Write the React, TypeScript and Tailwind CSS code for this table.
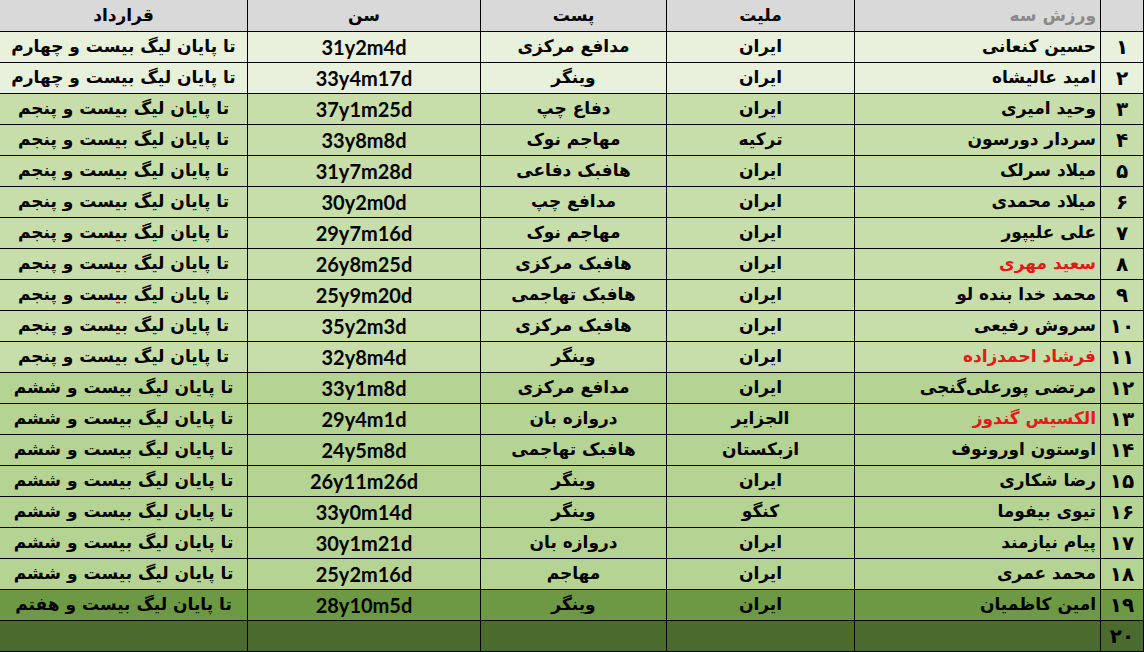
type Player = {
  name: string
  nat: string
  post: string
  age: string
  contract: string
  red?: boolean
}

const players: Player[] = [
  { name: "حسین کنعانی", nat: "ایران", post: "مدافع مرکزی", age: "31y2m4d", contract: "تا پایان لیگ بیست و چهارم" },
  { name: "امید عالیشاه", nat: "ایران", post: "وینگر", age: "33y4m17d", contract: "تا پایان لیگ بیست و چهارم" },
  { name: "وحید امیری", nat: "ایران", post: "دفاع چپ", age: "37y1m25d", contract: "تا پایان لیگ بیست و پنجم" },
  { name: "سردار دورسون", nat: "ترکیه", post: "مهاجم نوک", age: "33y8m8d", contract: "تا پایان لیگ بیست و پنجم" },
  { name: "میلاد سرلک", nat: "ایران", post: "هافبک دفاعی", age: "31y7m28d", contract: "تا پایان لیگ بیست و پنجم" },
  { name: "میلاد محمدی", nat: "ایران", post: "مدافع چپ", age: "30y2m0d", contract: "تا پایان لیگ بیست و پنجم" },
  { name: "علی علیپور", nat: "ایران", post: "مهاجم نوک", age: "29y7m16d", contract: "تا پایان لیگ بیست و پنجم" },
  { name: "سعید مهری", nat: "ایران", post: "هافبک مرکزی", age: "26y8m25d", contract: "تا پایان لیگ بیست و پنجم", red: true },
  { name: "محمد خدا بنده لو", nat: "ایران", post: "هافبک تهاجمی", age: "25y9m20d", contract: "تا پایان لیگ بیست و پنجم" },
  { name: "سروش رفیعی", nat: "ایران", post: "هافبک مرکزی", age: "35y2m3d", contract: "تا پایان لیگ بیست و پنجم" },
  { name: "فرشاد احمدزاده", nat: "ایران", post: "وینگر", age: "32y8m4d", contract: "تا پایان لیگ بیست و پنجم", red: true },
  { name: "مرتضی پورعلی‌گنجی", nat: "ایران", post: "مدافع مرکزی", age: "33y1m8d", contract: "تا پایان لیگ بیست و ششم" },
  { name: "الکسیس گندوز", nat: "الجزایر", post: "دروازه بان", age: "29y4m1d", contract: "تا پایان لیگ بیست و ششم", red: true },
  { name: "اوستون اورونوف", nat: "ازبکستان", post: "هافبک تهاجمی", age: "24y5m8d", contract: "تا پایان لیگ بیست و ششم" },
  { name: "رضا شکاری", nat: "ایران", post: "وینگر", age: "26y11m26d", contract: "تا پایان لیگ بیست و ششم" },
  { name: "تیوی بیفوما", nat: "کنگو", post: "وینگر", age: "33y0m14d", contract: "تا پایان لیگ بیست و ششم" },
  { name: "پیام نیازمند", nat: "ایران", post: "دروازه بان", age: "30y1m21d", contract: "تا پایان لیگ بیست و ششم" },
  { name: "محمد عمری", nat: "ایران", post: "مهاجم", age: "25y2m16d", contract: "تا پایان لیگ بیست و ششم" },
  { name: "امین کاظمیان", nat: "ایران", post: "وینگر", age: "28y10m5d", contract: "تا پایان لیگ بیست و هفتم" },
]

// ارقام فارسی برای ستون شماره
const faDigits = (n: number) => String(n).replace(/\d/g, (d) => "۰۱۲۳۴۵۶۷۸۹"[Number(d)])

function rowBg(i: number) {
  if (i < 2) return "bg-[#e8f1dc]"
  if (i < 11) return "bg-[#c7deab]"
  if (i < 18) return "bg-[#b5d493]"
  if (i === 18) return "bg-[#6d9944]"
  return "bg-[#4a6b2d]"
}

const cell = "border border-black px-1 leading-none"
const fa = "font-['DejaVu_Sans',sans-serif] font-bold text-[17px]"

export default function App() {
  return (
    <div dir="rtl" className="w-[1144px] h-[652px] bg-white overflow-hidden">
      <table className="table-fixed border-collapse w-[1144px] text-black">
        <colgroup>
          <col className="w-[43px]" />
          <col className="w-[246px]" />
          <col className="w-[188px]" />
          <col className="w-[186px]" />
          <col className="w-[233px]" />
          <col className="w-[248px]" />
        </colgroup>
        <thead>
          <tr className="h-[31px] bg-[#d9d9d9]">
            <th className={`${cell} border-t-0`}></th>
            <th className={`${cell} border-t-0 text-right text-[#8a8a8a] ${fa}`}>ورزش سه</th>
            <th className={`${cell} border-t-0 text-center ${fa}`}>ملیت</th>
            <th className={`${cell} border-t-0 text-center ${fa}`}>پست</th>
            <th className={`${cell} border-t-0 text-center ${fa}`}>سن</th>
            <th className={`${cell} border-t-0 text-center ${fa}`}>قرارداد</th>
          </tr>
        </thead>
        <tbody>
          {[...players, null].map((p, i) => (
            <tr key={i} className={`h-[31px] ${rowBg(i)}`}>
              <td className={`${cell} text-center font-['DejaVu_Sans',sans-serif] font-bold text-[20px]`}>{faDigits(i + 1)}</td>
              <td className={`${cell} text-right ${fa} ${p?.red ? "text-[#e3191b]" : ""}`}>{p?.name}</td>
              <td className={`${cell} text-center ${fa}`}>{p?.nat}</td>
              <td className={`${cell} text-center ${fa}`}>{p?.post}</td>
              <td dir="ltr" className={`${cell} text-center font-['Lato',sans-serif] font-bold text-[20px]`}>{p?.age}</td>
              <td className={`${cell} text-center ${fa}`}>{p?.contract}</td>
            </tr>
          ))}
        </tbody>
      </table>
    </div>
  )
}
